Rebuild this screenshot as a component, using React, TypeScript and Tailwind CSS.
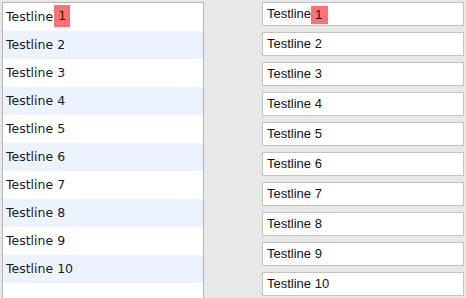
import React from 'react';

const rows = Array.from({ length: 10 }, (_, i) => i + 1);

function Label({ n, mark }: { n: number; mark: string }) {
  if (n !== 1) return <span>Testline {n}</span>;
  return (
    <span className="flex items-center">
      Testline
      <span className={mark}>1</span>
    </span>
  );
}

export default function App() {
  return (
    <div className="w-[466px] h-[298px] overflow-hidden bg-[#e8e8e8] flex items-start">
      <div className="ml-[2px] mt-[2px] w-[202px] h-[320px] shrink-0 border border-[#b5b5b5] bg-white">
        {rows.map(n => (
          <div
            key={n}
            className={`h-[28px] flex items-center pl-[3px] text-[12.5px] text-[#1a1a1a] ${n % 2 === 0 ? 'bg-[#edf3fe]' : 'bg-white'}`}
            style={{ fontFamily: '"DejaVu Sans", sans-serif' }}
          >
            <Label n={n} mark="ml-[1px] w-[16px] h-[22px] -mt-[2px] flex items-center justify-center bg-[#ff7272]" />
          </div>
        ))}
      </div>

      <div className="ml-[58px] mt-[2px] w-[202px] shrink-0 flex flex-col gap-[6px]">
        {rows.map(n => (
          <div
            key={n}
            className="h-[24px] border border-[#c3c3c3] bg-white flex items-center pl-[4px] text-[13px] text-[#111]"
            style={{ fontFamily: '"Liberation Sans", Arial, sans-serif' }}
          >
            <Label n={n} mark="w-[17px] h-[18px] mt-[2px] pl-[4px] flex items-center bg-[#ff7272]" />
          </div>
        ))}
      </div>
    </div>
  );
}
